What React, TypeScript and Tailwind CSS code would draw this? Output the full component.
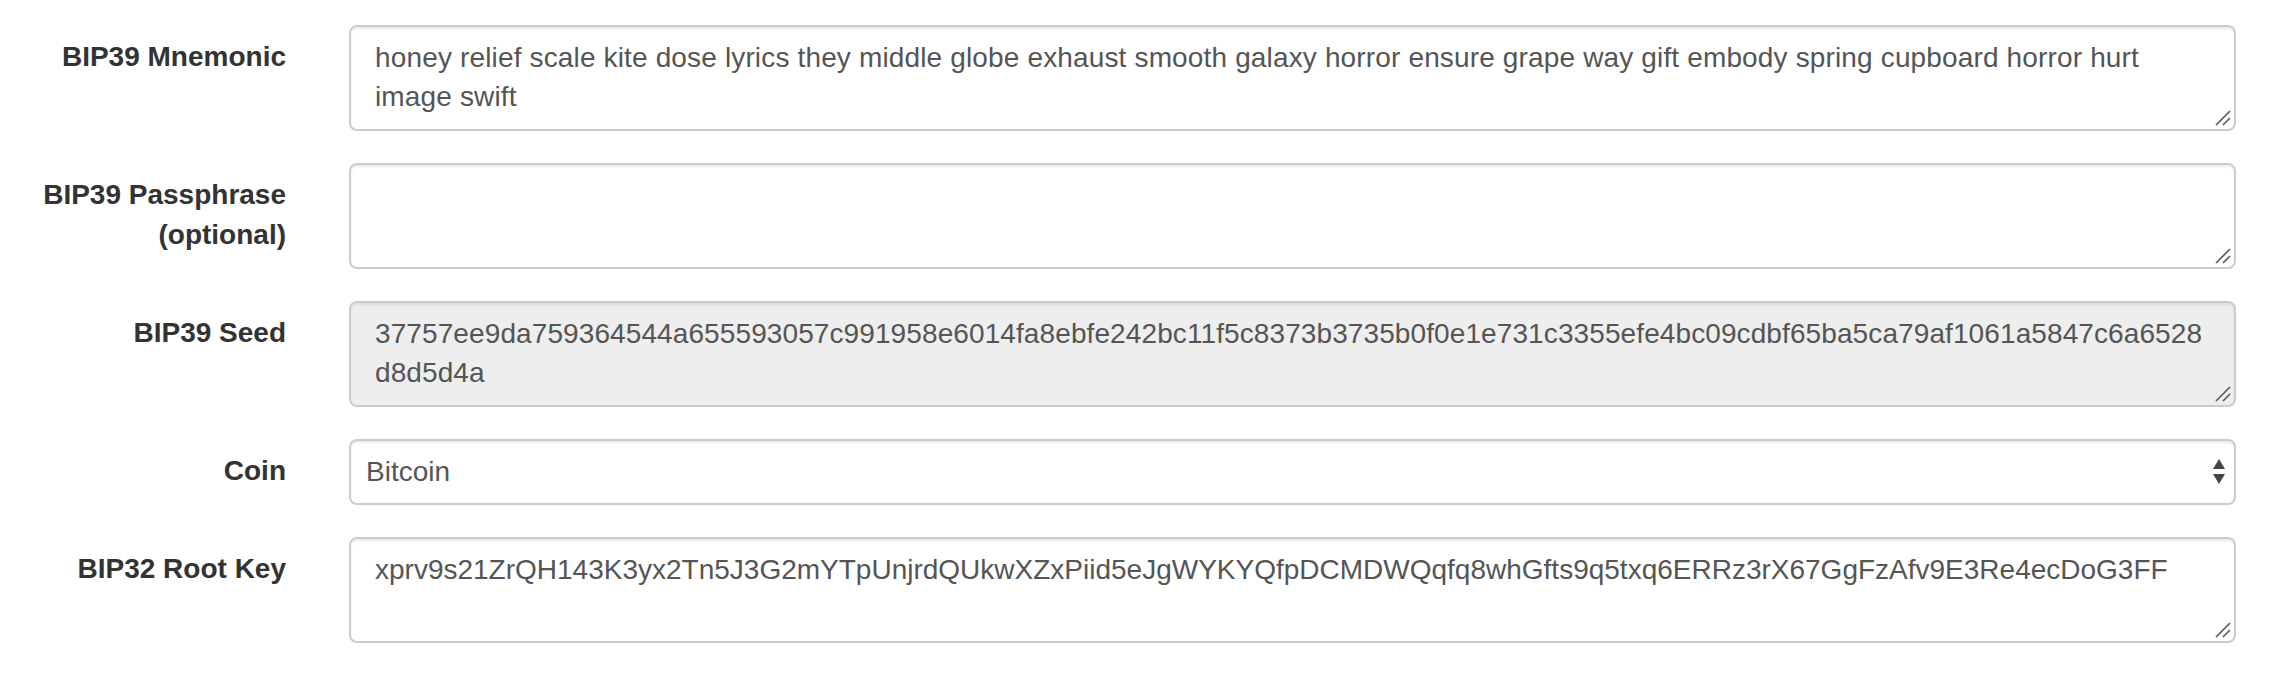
const font = "font-['Liberation_Sans',Arial,sans-serif]";

function Resizer() {
  return (
    <svg
      className="absolute right-[3px] bottom-[3px]"
      width="16"
      height="16"
      viewBox="0 0 16 16"
    >
      <line x1="1" y1="15" x2="15" y2="1" stroke="#555" strokeWidth="1.6" />
      <line x1="8" y1="15" x2="15" y2="8" stroke="#555" strokeWidth="1.6" />
    </svg>
  );
}

function Field({
  label,
  children,
}: {
  label: React.ReactNode;
  children: React.ReactNode;
}) {
  return (
    <div className="mb-[32px] flex">
      <label className="w-[317px] shrink-0 pr-[31px] pt-[12px] text-right text-[28px] leading-[40px] font-bold text-[#333]">
        {label}
      </label>
      <div className="flex-1 pl-[32px] pr-[44px]">{children}</div>
    </div>
  );
}

function Area({
  lines,
  readOnly,
  tracking = "",
}: {
  lines: string[];
  readOnly?: boolean;
  tracking?: string;
}) {
  return (
    <div
      className={`relative h-[106px] rounded-[8px] border-2 border-[#ccc] px-[24px] pt-[11px] text-[28px] leading-[39px] text-[#555] shadow-[inset_0_2px_2px_rgba(0,0,0,0.075)] ${tracking} ${
        readOnly ? "bg-[#eee]" : "bg-white"
      }`}
    >
      {lines.map((l, i) => (
        <div key={i} className="whitespace-nowrap">
          {l}
        </div>
      ))}
      <Resizer />
    </div>
  );
}

export default function App() {
  return (
    <main className={`min-h-screen w-full bg-white pt-[25px] ${font}`}>
      <Field label="BIP39 Mnemonic">
        <Area
          tracking="tracking-[0.15px]"
          lines={[
            "honey relief scale kite dose lyrics they middle globe exhaust smooth galaxy horror ensure grape way gift embody spring cupboard horror hurt",
            "image swift",
          ]}
        />
      </Field>
      <Field
        label={
          <>
            BIP39 Passphrase
            <br />
            (optional)
          </>
        }
      >
        <Area lines={[]} />
      </Field>
      <Field label="BIP39 Seed">
        <Area
          readOnly
          tracking="tracking-[0.1px]"
          lines={[
            "37757ee9da759364544a655593057c991958e6014fa8ebfe242bc11f5c8373b3735b0f0e1e731c3355efe4bc09cdbf65ba5ca79af1061a5847c6a6528",
            "d8d5d4a",
          ]}
        />
      </Field>
      <Field label="Coin">
        <div className="flex h-[66px] items-center justify-between rounded-[8px] border-2 border-[#ccc] bg-white pl-[15px] pr-[8px] text-[28px] text-[#555] shadow-[inset_0_2px_2px_rgba(0,0,0,0.075)]">
          <span>Bitcoin</span>
          <svg width="14" height="26" viewBox="0 0 14 26">
            <polygon points="7,0 13,10 1,10" fill="#444" />
            <polygon points="1,15 13,15 7,25" fill="#444" />
          </svg>
        </div>
      </Field>
      <Field label="BIP32 Root Key">
        <Area
          lines={[
            "xprv9s21ZrQH143K3yx2Tn5J3G2mYTpUnjrdQUkwXZxPiid5eJgWYKYQfpDCMDWQqfq8whGfts9q5txq6ERRz3rX67GgFzAfv9E3Re4ecDoG3FF",
          ]}
        />
      </Field>
    </main>
  );
}
